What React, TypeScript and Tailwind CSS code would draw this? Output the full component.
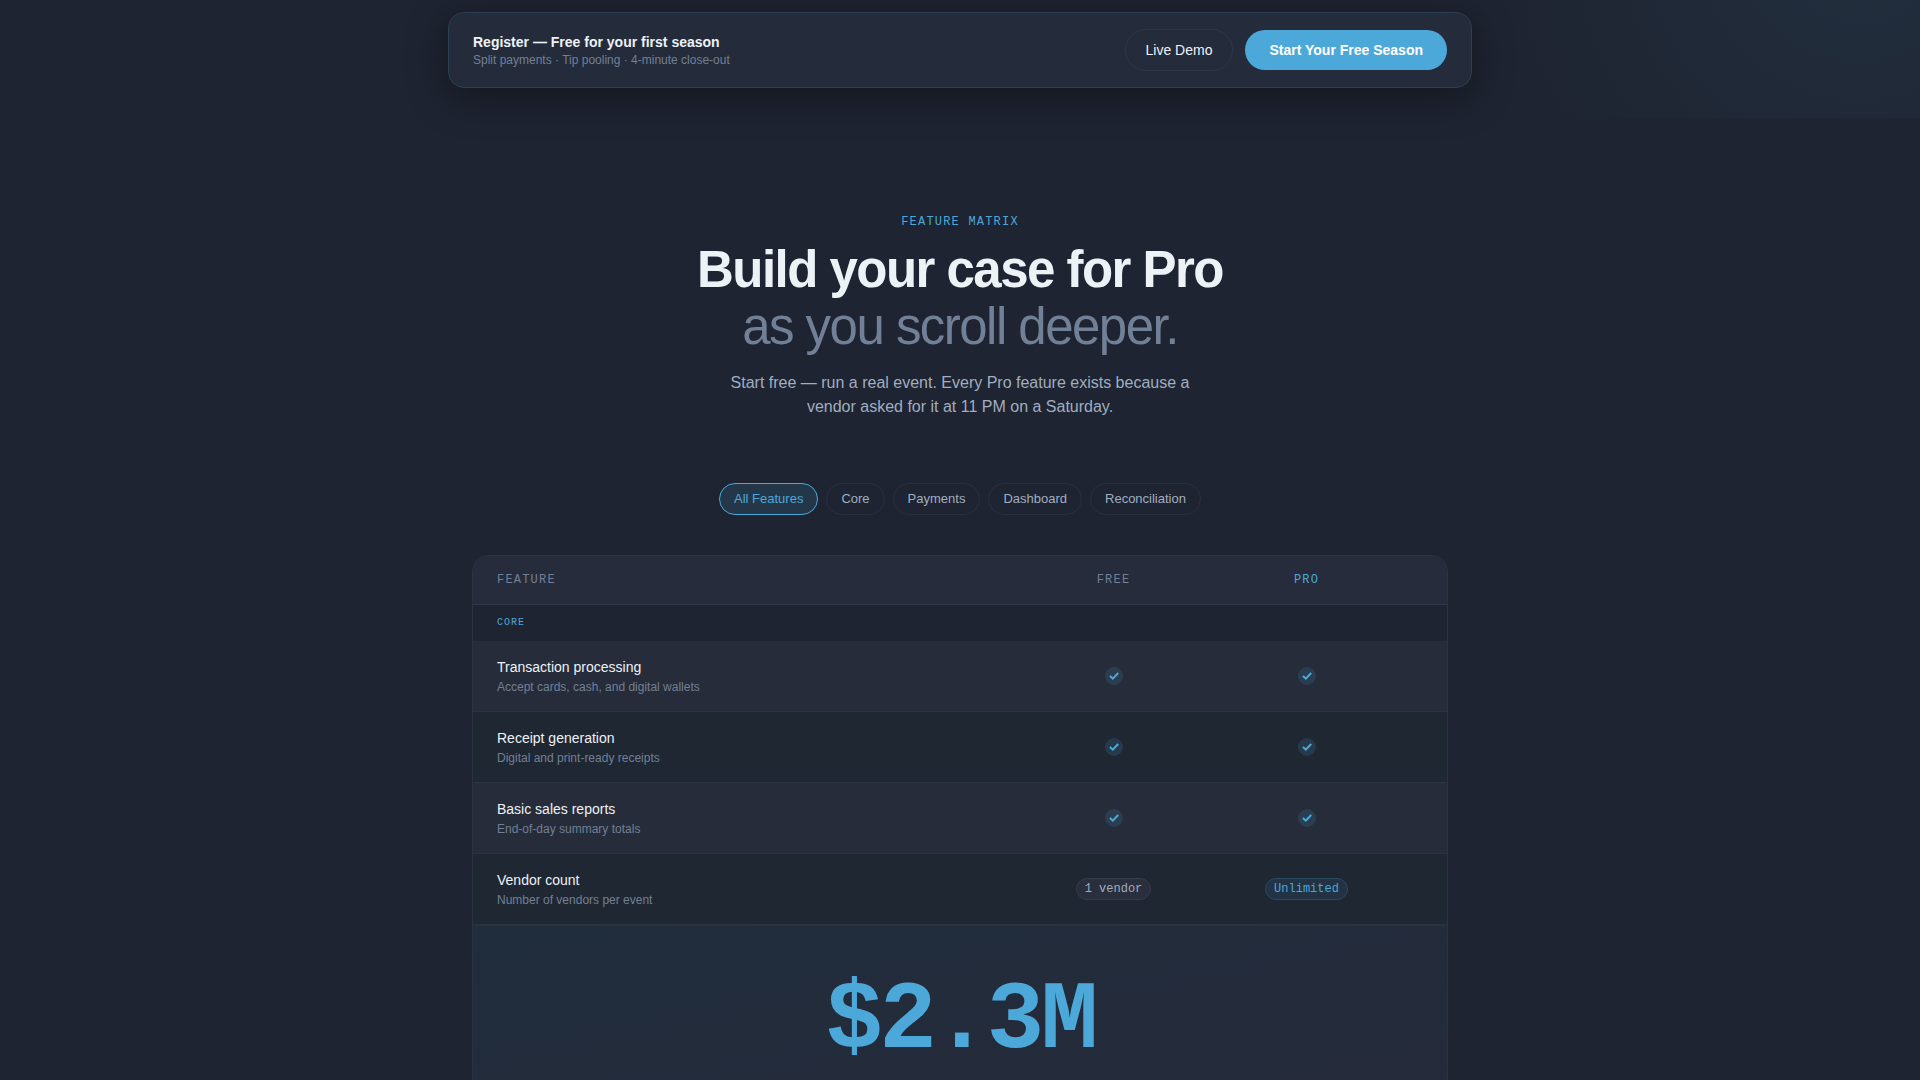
import React, { useState } from "react";

const categories = ["All Features", "Core", "Payments", "Dashboard", "Reconciliation"];

const features = [
  {
    category: "Core",
    name: "Transaction processing",
    description: "Accept cards, cash, and digital wallets",
    free: true,
    pro: true,
  },
  {
    category: "Core",
    name: "Receipt generation",
    description: "Digital and print-ready receipts",
    free: true,
    pro: true,
  },
  {
    category: "Core",
    name: "Basic sales reports",
    description: "End-of-day summary totals",
    free: true,
    pro: true,
  },
  {
    category: "Core",
    name: "Vendor count",
    description: "Number of vendors per event",
    free: "1 vendor",
    pro: "Unlimited",
  },
];

const App = () => {
  const [selectedCategory, setSelectedCategory] = useState("All Features");

  const visibleFeatures = features.filter(
    (feature) =>
      selectedCategory === "All Features" || feature.category === selectedCategory
  );

  return (
    <div className="min-h-screen bg-[#1e2431] font-['Liberation_Sans',Arial,sans-serif] text-[#edf2f7]">
      <div className="relative pt-3 pb-[30px]">
        <div className="pointer-events-none absolute inset-0 overflow-hidden">
          <div className="absolute -top-[420px] -right-[300px] h-[720px] w-[720px] rounded-full bg-[radial-gradient(circle,rgba(77,168,218,0.08)_0%,transparent_70%)]" />
        </div>
        <RegisterBar />
      </div>

      <main className="mx-auto max-w-5xl px-6 pt-24">
        <div className="text-center">
          <p className="font-['Liberation_Mono',monospace] text-xs tracking-widest text-[#4da8da]">
            FEATURE MATRIX
          </p>
          <h1 className="mt-[11px] text-[51px] leading-[57px] font-bold tracking-[-0.03em]">
            Build your case for Pro
            <br />
            <span className="font-normal text-[#718096]">as you scroll deeper.</span>
          </h1>
          <p className="mx-auto mt-4 max-w-[480px] text-base text-[#a0aec0]">
            Start free — run a real event. Every Pro feature exists because a vendor
            asked for it at 11 PM on a Saturday.
          </p>
        </div>

        <div className="mt-16 flex flex-wrap justify-center gap-2">
          {categories.map((cat) => (
            <button
              key={cat}
              onClick={() => setSelectedCategory(cat)}
              className={`rounded-full border px-3.5 py-[5px] text-[13px] leading-5 ${
                selectedCategory === cat
                  ? "border-[#4da8da] bg-[#4da8da]/15 text-[#4da8da]"
                  : "border-[#2a3040] text-[#a0aec0]"
              }`}
            >
              {cat}
            </button>
          ))}
        </div>

        <div className="mt-10 overflow-hidden rounded-2xl border border-[#2b3241]">
          <table className="w-full table-fixed">
            <colgroup>
              <col />
              <col className="w-[193px]" />
              <col className="w-[193px]" />
              <col className="w-11" />
            </colgroup>
            <thead>
              <tr className="border-b border-[#303747] bg-[#262c3b] font-['Liberation_Mono',monospace] text-xs tracking-widest text-[#718096]">
                <th scope="col" className="px-6 py-4 text-left font-normal">FEATURE</th>
                <th scope="col" className="font-normal">FREE</th>
                <th scope="col" className="font-normal text-[#4da8da]">PRO</th>
                <td />
              </tr>
            </thead>
            <tbody>
              <tr>
                <th
                  scope="colgroup"
                  colSpan={4}
                  className="px-6 py-2.5 text-left font-['Liberation_Mono',monospace] text-[10px] leading-4 font-normal tracking-widest text-[#4da8da]"
                >
                  CORE
                </th>
              </tr>
              {visibleFeatures.map((feature) => (
                <tr
                  key={feature.name}
                  className="border-b border-[#2b3241] odd:bg-[#1f2733] even:bg-[#262c39]"
                >
                  <td className="px-6 py-4">
                    <div className="text-sm">{feature.name}</div>
                    <div className="mt-0.5 text-xs text-[#718096]">
                      {feature.description}
                    </div>
                  </td>
                  <td>
                    <FeatureValue value={feature.free} />
                  </td>
                  <td>
                    <FeatureValue value={feature.pro} isPro />
                  </td>
                  <td />
                </tr>
              ))}
              <tr className="border-t-2 border-[#283342] bg-linear-to-br from-[#202d3d] to-[#252a39]">
                <td
                  colSpan={4}
                  className="pt-12 pb-16 text-center font-['Liberation_Mono',monospace] text-8xl font-bold tracking-[-0.04em] text-[#4da8da]"
                >
                  $2.3M
                </td>
              </tr>
            </tbody>
          </table>
        </div>
      </main>
    </div>
  );
};

const RegisterBar = () => (
  <header className="relative z-10 mx-auto flex max-w-5xl items-center justify-between rounded-2xl border border-[#2b4053] bg-[#242b3b] px-6 py-4 shadow-[0_8px_40px_rgba(0,0,0,0.4)]">
    <div>
      <div className="text-sm font-bold">Register — Free for your first season</div>
      <div className="text-xs text-[#718096]">
        Split payments · Tip pooling · 4-minute close-out
      </div>
    </div>
    <div className="flex items-center gap-3">
      <button className="rounded-full border border-[#2f3646] px-5 py-2.5 text-sm">
        Live Demo
      </button>
      <button className="rounded-full bg-[#4da8da] px-6 py-2.5 text-sm font-bold text-white">
        Start Your Free Season
      </button>
    </div>
  </header>
);

const FeatureValue = ({
  value,
  isPro = false,
}: {
  value: boolean | string;
  isPro?: boolean;
}) => (
  <div className="flex justify-center">
    {typeof value === "string" ? (
      <span
        className={`rounded-full border px-2 py-0.5 font-['Liberation_Mono',monospace] text-xs ${
          isPro
            ? "border-[#2b4a62] bg-[#213345] text-[#4da8da]"
            : "border-[#343b4a] bg-[#292f3d] text-[#a0aec0]"
        }`}
      >
        {value}
      </span>
    ) : (
      <span className="flex size-[18px] items-center justify-center rounded-full bg-[#4da8da]/15">
        <svg viewBox="0 0 10 10" className="size-2.5" fill="none" aria-label="Included">
          <path
            d="M0.9 5 3.8 7.6 9.2 2"
            stroke="#4da8da"
            strokeWidth="2"
          />
        </svg>
      </span>
    )}
  </div>
);

export default App;
